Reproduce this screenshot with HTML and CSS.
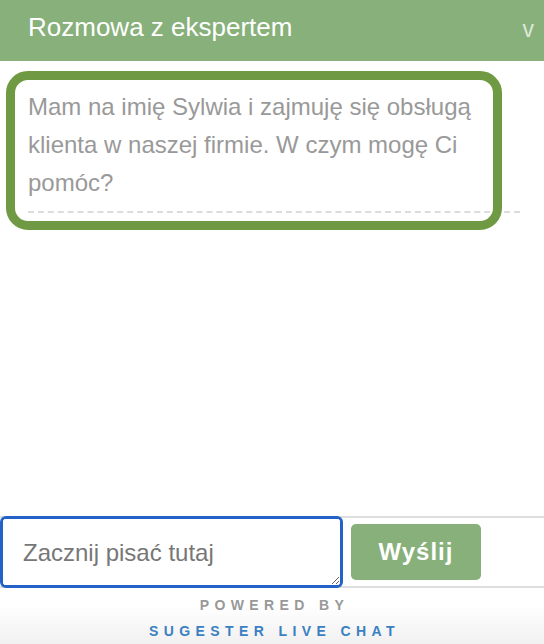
FILE: index.html
```html
<!DOCTYPE html>
<html lang="pl">
<head>
  <meta charset="UTF-8" />
  <meta name="viewport" content="width=device-width, initial-scale=1" />
  <title>Rozmowa z ekspertem</title>
  <link rel="stylesheet" href="styles.css">
</head>
<body>
  <div class="chat">
    <header class="chat-header">
      <h1>Rozmowa z ekspertem</h1>
      <span class="toggle">v</span>
    </header>

    <main class="messages">
      <div class="message highlighted">
        <p>Mam na imię Sylwia i zajmuję się obsługą klienta w naszej firmie. W czym mogę Ci pomóc?</p>
      </div>
    </main>

    <!-- Pole do pisania -->
    <form class="composer" onsubmit="return false;">
      <textarea placeholder="Zacznij pisać tutaj" autofocus></textarea>
      <button type="submit">Wyślij</button>
    </form>

    <footer class="powered">
      <span class="by">POWERED BY</span>
      <a href="#">SUGESTER LIVE CHAT</a>
    </footer>
  </div>
</body>
</html>
```

FILE: styles.css
```css
*, *::before, *::after { box-sizing: border-box; }
html, body {
  margin: 0;
  height: 100%;
}
body {
  font-family: "Liberation Sans", Arial, Helvetica, sans-serif;
  background: #fff;
}
.chat {
  display: flex;
  flex-direction: column;
  height: 100vh;
}

.chat-header {
  height: 61px;
  flex: none;
  background-color: #87b07a;
  display: flex;
  align-items: center;
  justify-content: space-between;
  padding: 0 10px 6px 28px;
}
.chat-header h1 {
  margin: 0;
  font-size: 26px;
  font-weight: normal;
  color: #fff;
}
.toggle {
  color: #dde8d8;
  font-size: 23px;
  margin-top: 4px;
}

.messages {
  flex: 1;
  padding: 27px 24px 0 28px;
}
.message {
  position: relative;
  border-bottom: 2px dashed #dcdcdc;
  padding-bottom: 9px;
}
.message p {
  margin: 0;
  font-size: 24px;
  line-height: 38px;
  color: #999;
}
/* Obramowanie wyróżnionej wiadomości */
.message.highlighted::before {
  content: "";
  position: absolute;
  top: -17px;
  left: -22px;
  right: 18px;
  bottom: -19px;
  border: 9px solid #6f9a43;
  border-radius: 22px;
}

.composer {
  flex: none;
  display: flex;
  gap: 8px;
  height: 72px;
  border-top: 2px solid #dedede;
  border-bottom: 2px solid #dedede;
}
.composer textarea {
  width: 343px;
  height: 72px;
  margin: -2px 0;
  padding: 20px 20px;
  border: 3px solid #2362c7;
  border-radius: 6px;
  font-family: inherit;
  font-size: 24px;
  color: #333;
  outline: none;
}
.composer textarea::placeholder {
  color: #777;
}
.composer button {
  align-self: center;
  width: 130px;
  height: 56px;
  background-color: #87b07a;
  color: #fff;
  border: none;
  border-radius: 5px;
  font-family: inherit;
  font-size: 24px;
  font-weight: bold;
  letter-spacing: 1px;
  cursor: pointer;
}

.powered {
  flex: none;
  height: 56px;
  display: flex;
  flex-direction: column;
  align-items: center;
  padding-top: 9px;
  gap: 10px;
  background: linear-gradient(#fff 30%, #f1f1f1);
  font-size: 14px;
  line-height: 16px;
  font-weight: bold;
  letter-spacing: 5.4px;
}
.powered .by {
  color: #999;
  margin-right: -5px;
}
.powered a {
  color: #3a80c2;
  text-decoration: none;
  margin-right: -5px;
}
```
